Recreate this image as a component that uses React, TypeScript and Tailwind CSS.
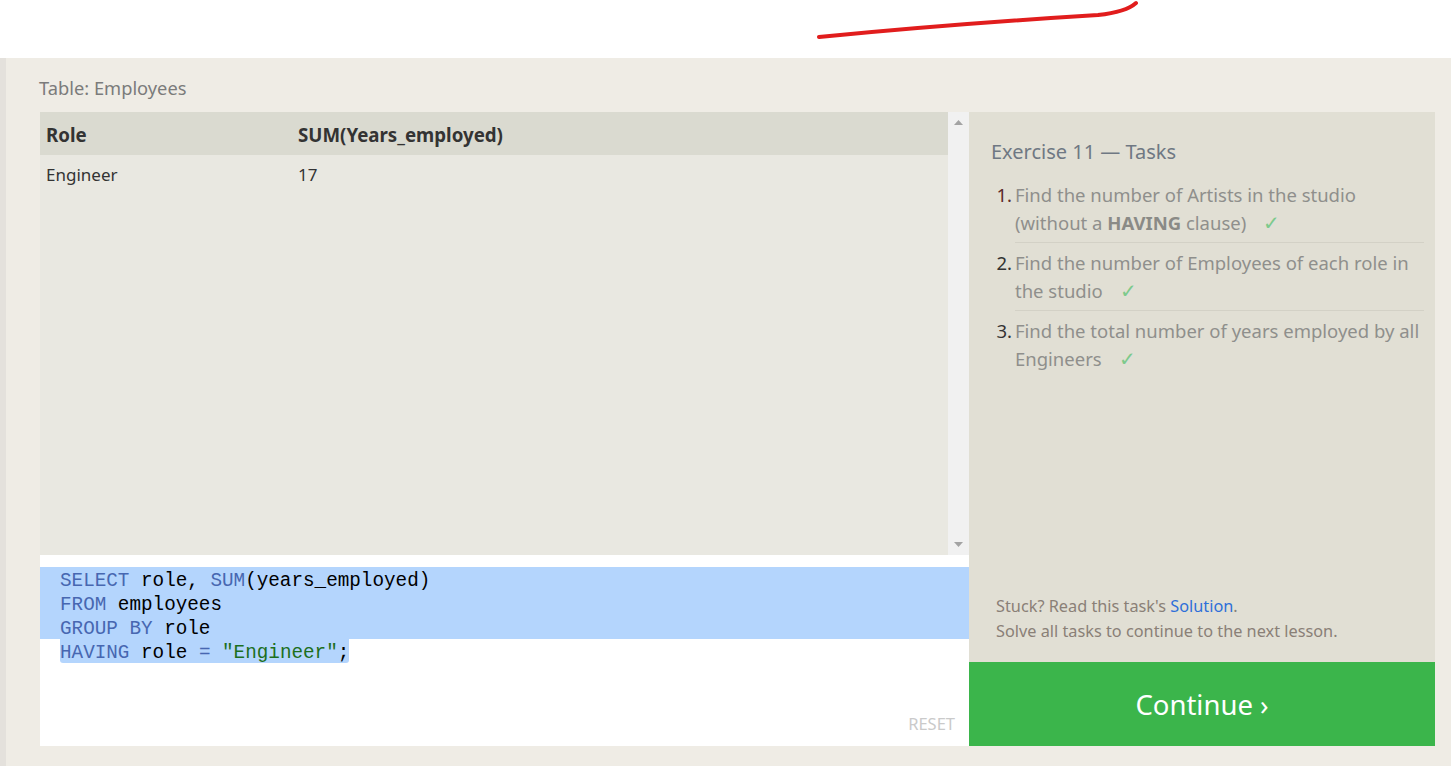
import React from "react";

const ui = { fontFamily: '"Noto Sans", "Open Sans", Arial, sans-serif' };
const mono = { fontFamily: '"Liberation Mono", "DejaVu Sans Mono", monospace' };

const Check = () => <span className="ml-[17px] text-[20px] leading-[28px] text-[#7dca8c]">✓</span>;

const tasks = [
    {
        n: "1.",
        numClass: "text-[#5b2b2b]",
        lines: [<>Find the number of Artists in the studio</>, <>(without a <b className="font-bold text-[#8a8a86]">HAVING</b> clause)<Check /></>],
    },
    { n: "2.", numClass: "text-[#333]", lines: [<>Find the number of Employees of each role in</>, <>the studio<Check /></>] },
    { n: "3.", numClass: "text-[#333]", lines: [<>Find the total number of years employed by all</>, <>Engineers<Check /></>] },
];

const Kw = ({ children }: { children: React.ReactNode }) => <span className="text-[#4767b1]">{children}</span>;

const App = () => {
    return (
        <div className="w-[1451px] h-[766px] overflow-hidden bg-white flex flex-col" style={ui}>
            <div className="h-[58px] bg-white relative shrink-0">
                <svg className="absolute left-0 top-0" width="1451" height="58" viewBox="0 0 1451 58">
                    <path d="M819 37 C 900 29, 1000 21, 1098 15 Q 1126 12, 1136 3" fill="none" stroke="#e11d1d" strokeWidth="4" strokeLinecap="round" />
                </svg>
            </div>
            <div className="flex flex-1">
                <div className="w-[6px] bg-[#e4e1dc]" />
                <div className="flex-1 bg-[#efece5] pl-[34px] pt-[18px]">
                    <div className="text-[18.3px] leading-[24px] text-[#7b7b7b] mb-[12px] -ml-px">Table: Employees</div>
                    <div className="flex">
                        <div className="w-[929px] flex flex-col">
                            <div className="h-[443px] flex">
                                <div className="w-[908px] bg-[#e9e8e1]">
                                    <div className="flex h-[43px] items-center pt-[3px] bg-[#dadad0] text-[18.7px] font-bold text-[#333]">
                                        <div className="w-[258px] pl-[6px]">Role</div>
                                        <div>SUM(Years_employed)</div>
                                    </div>
                                    <div className="flex h-[40px] items-center text-[17px] text-[#333]">
                                        <div className="w-[258px] pl-[6px]">Engineer</div>
                                        <div>17</div>
                                    </div>
                                </div>
                                <div className="w-[21px] bg-[#f1f1f1] flex flex-col items-center justify-between py-[8px]">
                                    <svg width="9" height="5" viewBox="0 0 9 5"><path d="M4.5 0 L9 5 L0 5 Z" fill="#a3a3a3" /></svg>
                                    <svg width="9" height="5" viewBox="0 0 9 5"><path d="M0 0 L9 0 L4.5 5 Z" fill="#a3a3a3" /></svg>
                                </div>
                            </div>
                            <div className="h-[191px] bg-white relative pt-[12px] text-[19.3px] leading-[24px] text-black" style={mono}>
                                <div className="bg-[#b4d5fd] pl-[20px] whitespace-pre">
                                    <div><span className="relative top-[2px]"><Kw>SELECT</Kw> role, <Kw>SUM</Kw>(years_employed)</span></div>
                                    <div><span className="relative top-[2px]"><Kw>FROM</Kw> employees</span></div>
                                    <div><span className="relative top-[2px]"><Kw>GROUP BY</Kw> role</span></div>
                                </div>
                                <div className="pl-[20px] whitespace-pre">
                                    <span className="bg-[#b4d5fd] rounded-b-[3px] inline-block">
                                        <span className="relative top-[2px]"><Kw>HAVING</Kw> role <Kw>=</Kw> <span className="text-[#1d6f1d]">"Engineer"</span>;</span>
                                    </span>
                                </div>
                                <div className="absolute right-[14px] bottom-[10px] text-[16.5px] text-[#cacaca] uppercase" style={ui}>Reset</div>
                            </div>
                        </div>
                        <div className="w-[466px] flex flex-col">
                            <div className="h-[550px] bg-[#e1dfd4] pl-[22px] pr-[11px] pt-[26px] pb-[18px] flex flex-col">
                                <div className="text-[20px] leading-[28px] text-[#6f7883]">Exercise 11 — Tasks</div>
                                <div className="mt-[15px]">
                                    {tasks.map((t, i) => (
                                        <div key={i} className={`flex text-[18.5px] leading-[28px] ${i > 0 ? "pt-[6px]" : ""}`}>
                                            <div className={`w-[24px] text-right pr-[3px] ${t.numClass}`}>{t.n}</div>
                                            <div className={`flex-1 text-[#8f8f8c] pb-[5px] ${i < 2 ? "border-b border-[#d3d1c6]" : ""}`}>
                                                {t.lines.map((l, j) => (
                                                    <div key={j} className="h-[28px] whitespace-nowrap">{l}</div>
                                                ))}
                                            </div>
                                        </div>
                                    ))}
                                </div>
                                <div className="mt-auto pl-[5px] text-[16.3px] leading-[25px] text-[#8a8077]">
                                    <div>Stuck? Read this task's <span className="text-[#2e6fd9]">Solution</span>.</div>
                                    <div>Solve all tasks to continue to the next lesson.</div>
                                </div>
                            </div>
                            <div className="h-[84px] bg-[#3bb54b] flex items-center justify-center pt-[2px] text-white text-[27.5px]">
                                Continue ›
                            </div>
                        </div>
                    </div>
                </div>
            </div>
        </div>
    );
};

export default App;
